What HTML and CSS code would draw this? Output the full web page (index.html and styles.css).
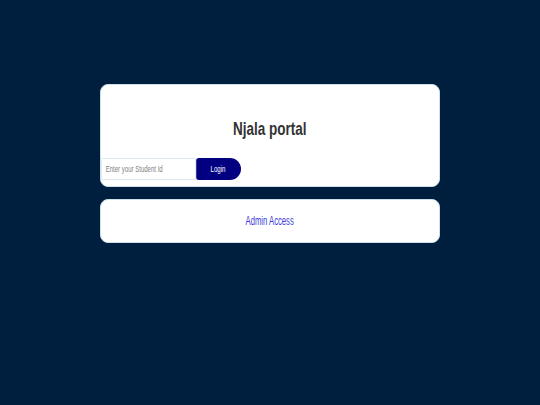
FILE: index.html
```html
<!DOCTYPE html>
<html>
<head>
<meta charset="utf-8">
<link rel="stylesheet" href="styles.css">
</head>
<body>
<main class="page">
  <section class="card login-card">
    <h1 class="title"><span class="squeeze-title">Njala portal</span></h1>
    <form class="login-form">
      <div class="input-wrap">
        <input class="student-input" type="text" placeholder="Enter your Student Id">
      </div>
      <button class="login-btn" type="button"><span class="squeeze-small">Login</span></button>
    </form>
  </section>
  <section class="card admin-card">
    <a class="admin-link" href="#"><span class="squeeze-admin">Admin Access</span></a>
  </section>
</main>
</body>
</html>
```
FILE: styles.css
```css
html, body {
  margin: 0;
  padding: 0;
  height: 100%;
}
body {
  background: #001f3f;
  font-family: "Liberation Sans", Arial, sans-serif;
}
.page {
  display: flex;
  flex-direction: column;
  align-items: center;
  gap: 12px;
  padding-top: 84px;
}
.card {
  width: 340px;
  background: #ffffff;
  border-radius: 8px;
  box-sizing: border-box;
  border: 1px solid #cfe0ea;
}
.login-card {
  height: 103px;
  padding-top: 34px;
}
.title {
  margin: 0;
  text-align: center;
  font-size: 19px;
  font-weight: bold;
  color: #333333;
  line-height: 20px;
}
.squeeze-title {
  display: inline-block;
  transform: scaleX(0.71);
}
.login-form {
  display: flex;
  margin-top: 19px;
}
.input-wrap {
  width: 95px;
  height: 22px;
  flex: none;
}
.student-input {
  width: 142px;
  height: 22px;
  box-sizing: border-box;
  border: 1px solid #d6e4ec;
  border-radius: 2px;
  padding: 0 6px;
  font-family: inherit;
  font-size: 9px;
  color: #333;
  outline: none;
  transform: scaleX(0.67);
  transform-origin: left center;
}
.student-input::placeholder {
  color: #808080;
}
.login-btn {
  width: 45px;
  height: 22px;
  border: none;
  background: #020080;
  color: #ffffff;
  font-family: inherit;
  font-size: 9px;
  border-radius: 3px 11px 11px 3px;
  padding: 0;
}
.squeeze-small {
  display: inline-block;
  transform: scaleX(0.68);
}
.admin-card {
  height: 44px;
  display: flex;
  align-items: center;
  justify-content: center;
}
.admin-link {
  color: #3b3bdc;
  text-decoration: none;
  font-size: 12px;
  line-height: 14px;
}
.squeeze-admin {
  display: inline-block;
  transform: scaleX(0.64);
}
```
